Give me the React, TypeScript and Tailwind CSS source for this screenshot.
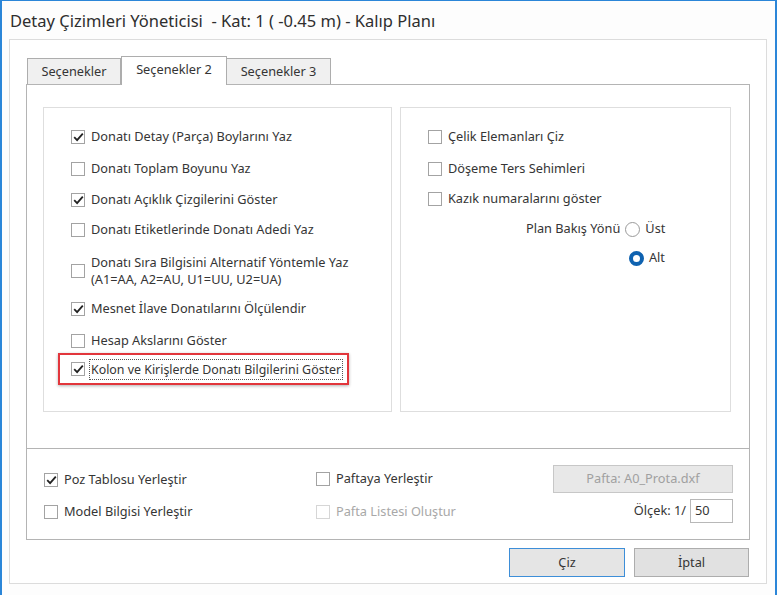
import type { ReactNode } from "react";

const font = { fontFamily: '"Noto Sans", "Open Sans", sans-serif' };

function Box({ checked = false, disabled = false }: { checked?: boolean; disabled?: boolean }) {
  return (
    <span
      className={`flex h-[14px] w-[14px] shrink-0 items-center justify-center border bg-white ${
        disabled ? "border-[#d6d6d6]" : "border-[#a3a3a3]"
      }`}
    >
      {checked && (
        <svg width="11" height="10" viewBox="0 0 11 10">
          <path d="M1.2 5.2 L4.1 8.1 L9.8 1.6" fill="none" stroke="#222" strokeWidth="1.8" />
        </svg>
      )}
    </span>
  );
}

function Check({
  label,
  checked,
  disabled,
  className = "",
}: {
  label: ReactNode;
  checked?: boolean;
  disabled?: boolean;
  className?: string;
}) {
  return (
    <div className={`flex h-5 items-center gap-[6px] ${className}`}>
      <Box checked={checked} disabled={disabled} />
      <span className={disabled ? "text-[#a8a8a8]" : "text-[#353535]"}>{label}</span>
    </div>
  );
}

function Radio({ selected = false, label }: { selected?: boolean; label: string }) {
  return (
    <div className="flex items-center gap-[5px]">
      {selected ? (
        <span className="h-[15px] w-[15px] rounded-full border-[4px] border-[#0f62b0] bg-white" />
      ) : (
        <span className="h-[15px] w-[15px] rounded-full border border-[#9a9a9a] bg-white" />
      )}
      <span>{label}</span>
    </div>
  );
}

export default function App() {
  return (
    <div
      style={font}
      className="flex h-[595px] w-[777px] flex-col border-x-2 border-t border-[#2b86d8] bg-[#fdfdfd] text-[12.75px] text-[#353535]"
    >
      <div className="h-[38px] pl-[8px] pt-[8px] text-[16.5px] leading-[24px] text-[#2e2e2e]">
        Detay Çizimleri Yöneticisi&nbsp; - Kat: 1 ( -0.45 m) - Kalıp Planı
      </div>

      <div className="ml-[7px] mr-[8px] flex h-[545px] flex-col border border-[#dcdcdc] bg-white px-[16px] pt-[16px]">
        {/* tab strip */}
        <div className="flex h-[28px] items-end pl-[1px]">
          <div className="flex h-[26px] w-[94px] items-center justify-center border border-b-0 border-[#adadad] bg-[#f0f0f0]">
            Seçenekler
          </div>
          <div className="relative z-10 -mb-px flex h-[29px] w-[106px] items-center justify-center border border-b-0 border-[#adadad] bg-white pb-[3px]">
            Seçenekler 2
          </div>
          <div className="flex h-[26px] w-[104px] items-center justify-center border border-b-0 border-l-0 border-[#adadad] bg-[#f0f0f0]">
            Seçenekler 3
          </div>
        </div>

        {/* tab page */}
        <div className="flex h-[365px] gap-[8px] border border-[#b4b4b4] pl-[16px] pr-[18px] pt-[22px]">
          <div className="h-[305px] w-[351px] border border-[#dedede] pl-[27px] pt-[19px]">
            <Check checked label="Donatı Detay (Parça) Boylarını Yaz" />
            <Check className="mt-[12px]" label="Donatı Toplam Boyunu Yaz" />
            <Check className="mt-[11px]" checked label="Donatı Açıklık Çizgilerini Göster" />
            <Check className="mt-[10px]" label="Donatı Etiketlerinde Donatı Adedi Yaz" />
            <div className="mt-[14px] flex items-center gap-[6px]">
              <Box />
              <span className="leading-[17px]">
                Donatı Sıra Bilgisini Alternatif Yöntemle Yaz
                <br />
                (A1=AA, A2=AU, U1=UU, U2=UA)
              </span>
            </div>
            <Check className="mt-[11px]" checked label="Mesnet İlave Donatılarını Ölçülendir" />
            <Check className="mt-[12px]" label="Hesap Akslarını Göster" />
            <div className="-ml-[13px] mt-[2px] flex h-[32px] w-[291px] items-center border-2 border-[#e2363c] pl-[11px] shadow-[0_1px_3px_rgba(0,0,0,0.3)]">
              <Box checked />
              <span className="ml-[4px] whitespace-nowrap border border-dotted border-[#555] px-[1px] text-[12.4px] leading-[19px]">
                Kolon ve Kirişlerde Donatı Bilgilerini Göster
              </span>
            </div>
          </div>

          <div className="h-[305px] w-[333px] border border-[#dedede] pl-[27px] pt-[19px]">
            <Check label="Çelik Elemanları Çiz" />
            <Check className="mt-[12px]" label="Döşeme Ters Sehimleri" />
            <Check className="mt-[10px]" label="Kazık numaralarını göster" />
            <div className="mt-[10px] flex h-5 items-center gap-[5px] pl-[98px]">
              <span>Plan Bakış Yönü</span>
              <Radio label="Üst" />
            </div>
            <div className="mt-[9px] flex h-5 items-center pl-[201px]">
              <Radio selected label="Alt" />
            </div>
          </div>
        </div>

        {/* bottom group */}
        <div className="flex h-[91px] border-x border-b border-[#b4b4b4] pl-[17px] pt-[21px]">
          <div className="w-[272px]">
            <Check checked label="Poz Tablosu Yerleştir" />
            <Check className="mt-[12px]" label="Model Bilgisi Yerleştir" />
          </div>
          <div className="w-[237px]">
            <Check className="mt-[-1px]" label="Paftaya Yerleştir" />
            <Check className="mt-[13px]" disabled label="Pafta Listesi Oluştur" />
          </div>
          <div className="flex flex-col items-end">
            <div className="-mt-[5px] flex h-[28px] w-[180px] items-center justify-center border border-[#c7c7c7] bg-[#e8e8e8] text-[#a0a0a0]">
              Pafta: A0_Prota.dxf
            </div>
            <div className="mt-[6px] flex items-center gap-[4px]">
              <span>Ölçek: 1/</span>
              <div className="flex h-[24px] w-[43px] items-center border border-[#b8b8b8] bg-white pl-[4px]">
                50
              </div>
            </div>
          </div>
        </div>

        {/* buttons */}
        <div className="mt-[8px] flex justify-end gap-[9px] pr-[1px]">
          <div className="flex h-[29px] w-[116px] items-center justify-center border border-[#3d8ed8] bg-[#e5e5e5]">
            Çiz
          </div>
          <div className="flex h-[29px] w-[115px] items-center justify-center border border-[#adadad] bg-[#e1e1e1]">
            İptal
          </div>
        </div>
      </div>
    </div>
  );
}
